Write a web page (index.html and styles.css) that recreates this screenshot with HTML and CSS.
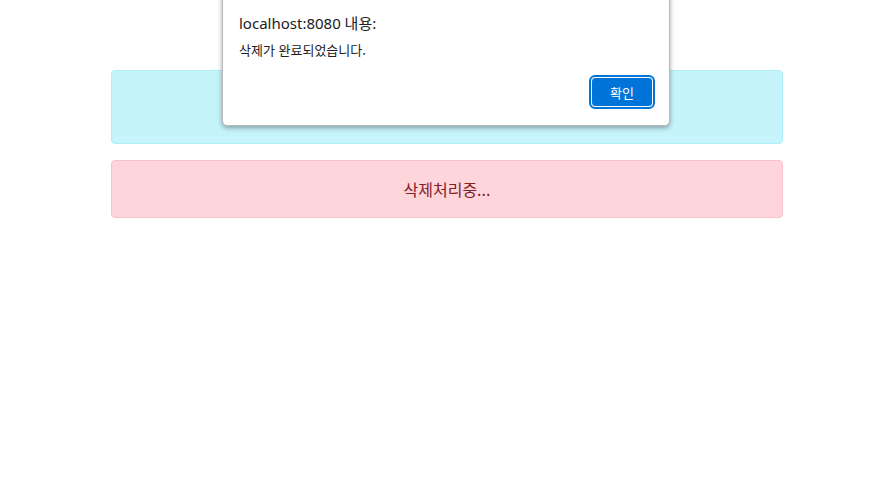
FILE: index.html
```html
<!DOCTYPE html>
<html lang="ko">
<head>
<meta charset="utf-8">
<title>삭제</title>
<link rel="stylesheet" href="styles.css">
</head>
<body>
<main class="container">
  <div class="alert alert-info"></div>
  <div class="alert alert-danger">삭제처리중...</div>
</main>
<div class="dialog" role="alertdialog">
  <div class="dialog-title">localhost:8080 내용:</div>
  <div class="dialog-msg">삭제가 완료되었습니다.</div>
  <div class="dialog-actions"><button class="btn-ok">확인</button></div>
</div>
</body>
</html>
```
FILE: styles.css
```css
html, body { margin: 0; padding: 0; background: #fff; }
body { font-family: "Noto Sans", "Noto Sans CJK KR", sans-serif; width: 893px; height: 487px; position: relative; overflow: hidden; }
.container { width: 672px; margin: 0 auto; padding-top: 70px; margin-left: 111px; display: flex; flex-direction: column; gap: 16px; }
.alert { border: 1px solid transparent; border-radius: 4px; box-sizing: border-box; text-align: center; font-family: "Noto Sans CJK KR", sans-serif; font-size: 16px; }
.alert-info { background: #c5f4fb; border-color: #aeeef8; height: 74px; }
.alert-danger { background: #fdd5da; border-color: #f7c3c9; color: #842029; height: 58px; line-height: 56px; }
.dialog { position: absolute; top: -6px; left: 222px; width: 448px; height: 132px; box-sizing: border-box; background: #fff; border: 1px solid #b9b9b9; border-radius: 0 0 5px 5px; box-shadow: 0 2px 5px rgba(0,0,0,0.35); padding: 17px 16px 0 16px; }
.dialog-title { font-family: "Noto Sans", "Noto Sans CJK KR", sans-serif; font-size: 15px; color: #202124; line-height: 22px; }
.dialog-msg { font-family: "Noto Sans CJK KR", sans-serif; font-size: 13px; color: #202124; margin-top: 7px; line-height: 18px; }
.dialog-actions { display: flex; justify-content: flex-end; margin-top: 18px; }
.btn-ok { width: 62px; height: 30px; margin-right: 0; background: #0074d9; color: #fff; border: 1px solid #fff; outline: 2px solid #0074d9; outline-offset: 0; border-radius: 4px; font-family: "Noto Sans CJK KR", sans-serif; font-size: 13px; padding: 0; }
```
